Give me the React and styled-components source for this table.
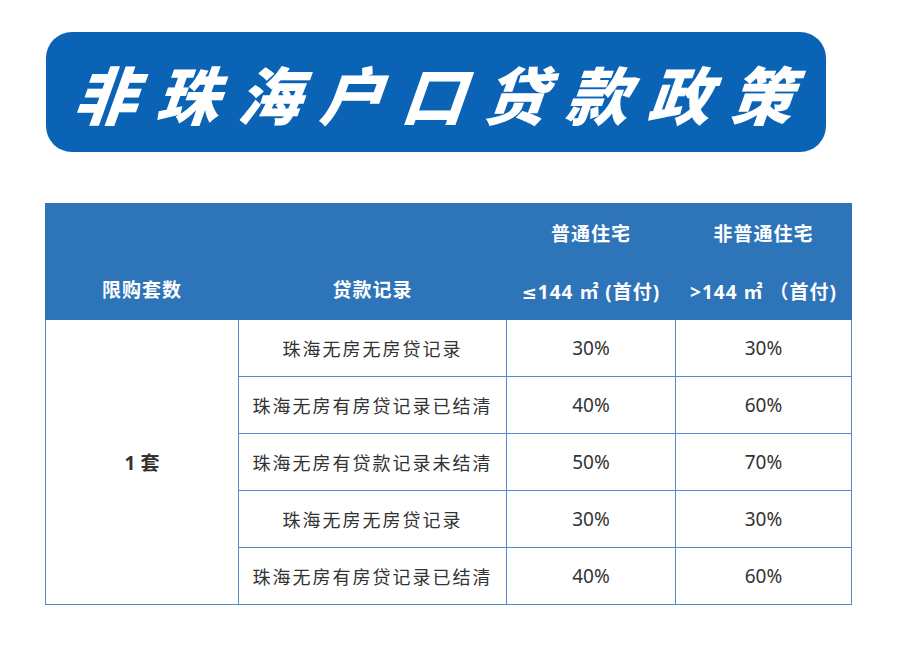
import React from "react";
import styled, { createGlobalStyle } from "styled-components";

const GlobalStyle = createGlobalStyle`
  html, body {
    margin: 0;
    padding: 0;
    background: #ffffff;
  }
  body {
    font-family: "Noto Sans", "Noto Sans CJK SC", sans-serif;
  }
`;

const Page = styled.div`
  width: 900px;
  height: 650px;
  box-sizing: border-box;
  padding: 32px 49px 0 45px;
  display: flex;
  flex-direction: column;
  align-items: flex-start;
`;

const Banner = styled.div`
  width: 780px;
  height: 120px;
  margin-left: 1px;
  box-sizing: border-box;
  background: #0b63b6;
  border-radius: 26px;
  display: flex;
  align-items: center;
  justify-content: center;
`;

const Title = styled.h1`
  margin: 0;
  color: #ffffff;
  font-family: "Noto Sans CJK SC", sans-serif;
  font-weight: 900;
  font-size: 63px;
  font-style: italic;
  letter-spacing: 19px;
  line-height: 1;
  padding-left: 16px;
  transform: skewX(-6deg);
`;

const Table = styled.table`
  margin-top: 51px;
  width: 806px;
  border-collapse: collapse;
  table-layout: fixed;
  font-family: "Noto Sans", "Noto Sans CJK SC", sans-serif;
`;

const HeadCell = styled.th`
  background: #2e74b8;
  color: #ffffff;
  font-weight: 700;
  font-size: 19px;
  letter-spacing: 1px;
  height: 57px;
  padding: 0;
  text-align: center;
  vertical-align: ${({ $bottom }) => ($bottom ? "bottom" : "middle")};
  padding-bottom: ${({ $bottom }) => ($bottom ? "16px" : "0")};
  border: 1px solid #2e74b8;
  border-left: 1px solid ${({ $divider }) => ($divider ? "#3d7cbf" : "#2e74b8")};
`;

const Symbol = styled.span`
  font-family: "DejaVu Sans", sans-serif;
  font-weight: 700;
  font-size: 18px;
`;

const Cell = styled.td`
  height: 56px;
  padding: 0;
  text-align: center;
  vertical-align: middle;
  font-size: ${({ $kind }) => ($kind === "num" ? "19px" : $kind === "count" ? "19px" : "18px")};
  letter-spacing: ${({ $kind }) => ($kind === "text" ? "2px" : "0")};
  color: #333333;
  font-weight: ${({ $kind }) => ($kind === "count" ? 700 : 400)};
  border: 1px solid #5b88cc;
`;

const rows = [
  ["珠海无房无房贷记录", "30%", "30%"],
  ["珠海无房有房贷记录已结清", "40%", "60%"],
  ["珠海无房有贷款记录未结清", "50%", "70%"],
  ["珠海无房无房贷记录", "30%", "30%"],
  ["珠海无房有房贷记录已结清", "40%", "60%"],
];

export default function App() {
  return (
    <>
      <GlobalStyle />
      <Page>
        <Banner>
          <Title>非珠海户口贷款政策</Title>
        </Banner>
        <Table>
          <colgroup>
            <col style={{ width: 193 }} />
            <col style={{ width: 268 }} />
            <col style={{ width: 169 }} />
            <col style={{ width: 176 }} />
          </colgroup>
          <thead>
            <tr>
              <HeadCell rowSpan={2} $bottom>
                限购套数
              </HeadCell>
              <HeadCell rowSpan={2} $bottom $divider>
                贷款记录
              </HeadCell>
              <HeadCell $divider>普通住宅</HeadCell>
              <HeadCell $divider>非普通住宅</HeadCell>
            </tr>
            <tr>
              <HeadCell $divider>
                <Symbol>≤</Symbol>144 ㎡ (首付)
              </HeadCell>
              <HeadCell $divider>&gt;144 ㎡ （首付)</HeadCell>
            </tr>
          </thead>
          <tbody>
            {rows.map((r, i) => (
              <tr key={i}>
                {i === 0 && (
                  <Cell rowSpan={5} $kind="count">
                    1 套
                  </Cell>
                )}
                <Cell $kind="text">{r[0]}</Cell>
                <Cell $kind="num">{r[1]}</Cell>
                <Cell $kind="num">{r[2]}</Cell>
              </tr>
            ))}
          </tbody>
        </Table>
      </Page>
    </>
  );
}
